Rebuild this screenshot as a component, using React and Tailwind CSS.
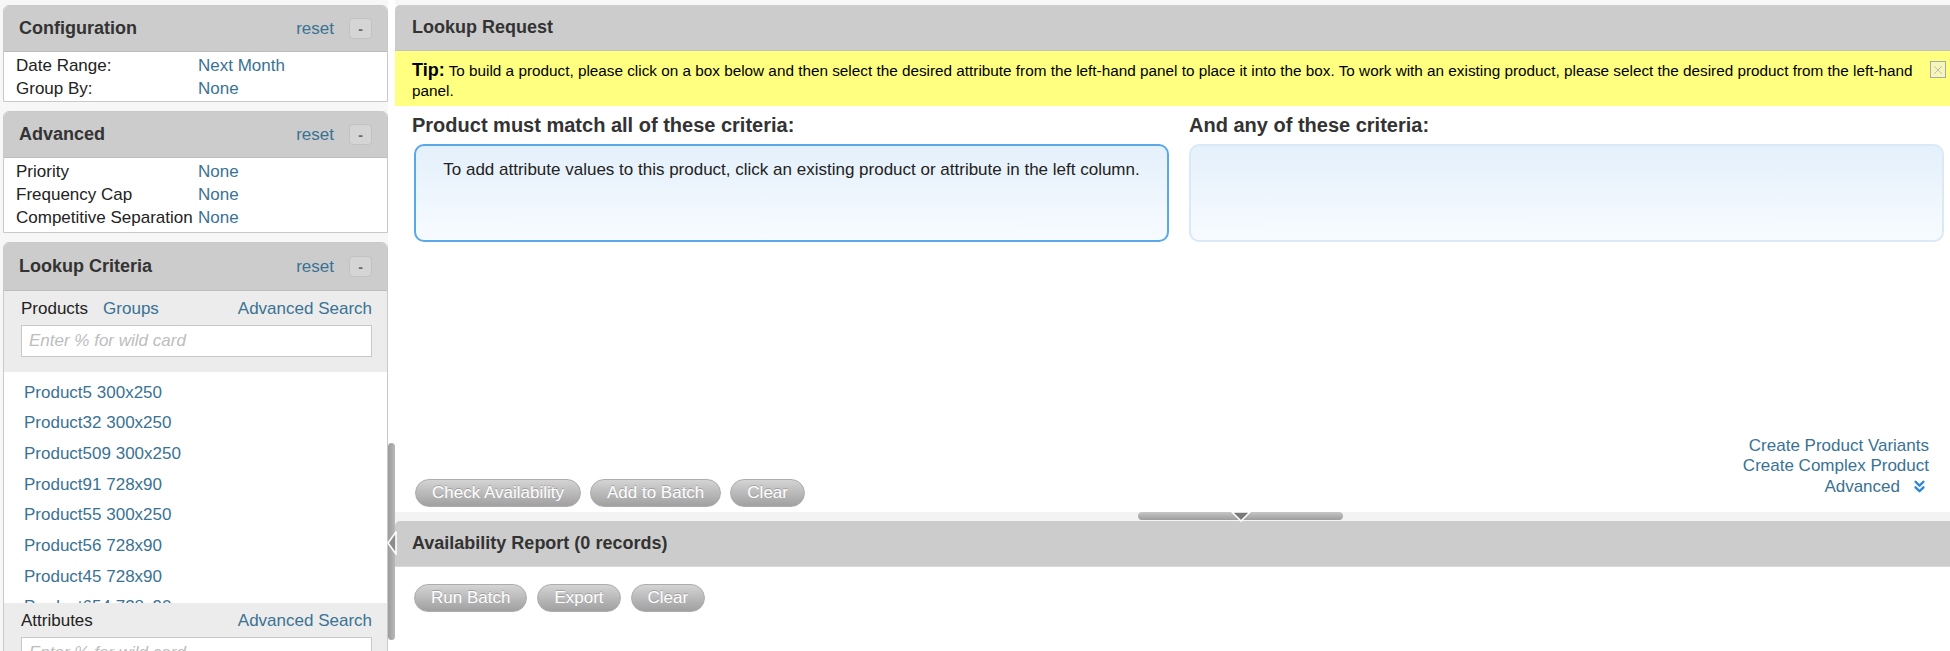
import React from "react";
import { ChevronsDown, X } from "lucide-react";

const LINK = "text-[#3a7293]";

function PanelHeader({ title, h = "h-[46px]" }) {
  return (
    <div className={`${h} shrink-0 bg-[#cccccc] border-b border-[#bdbdbd] rounded-t-[5px] flex items-center pl-[15px] pr-[15px]`}>
      <span className="text-[18px] font-bold text-[#333]">{title}</span>
      <span className={`ml-auto text-[17px] ${LINK}`}>reset</span>
      <span className="ml-[15px] w-[23px] h-[21px] rounded-[4px] bg-[#d5d5d5] border border-[#c2c2c2] flex items-center justify-center text-[#6a6a6a] text-[14px] font-bold leading-none">
        -
      </span>
    </div>
  );
}

function Row({ label, value }) {
  return (
    <div className="flex h-[23px] items-center text-[17px]">
      <span className="w-[182px] shrink-0 text-[#222] whitespace-nowrap">{label}</span>
      <span className={LINK}>{value}</span>
    </div>
  );
}

function Btn({ children }) {
  return (
    <span className="h-[28px] px-[16px] rounded-full border border-[#adadad] bg-linear-to-b from-[#d4d4d4] to-[#a0a0a0] text-white text-[17px] flex items-center [text-shadow:0_-1px_0_rgba(0,0,0,0.2)] whitespace-nowrap">
      {children}
    </span>
  );
}

const products = [
  "Product5 300x250",
  "Product32 300x250",
  "Product509 300x250",
  "Product91 728x90",
  "Product55 300x250",
  "Product56 728x90",
  "Product45 728x90",
  "Product654 728x90",
];

export default function App() {
  return (
    <div className="w-[1950px] h-[651px] overflow-hidden bg-[#f7f7f7] flex font-['Liberation_Sans',Arial,sans-serif]">
      {/* Sidebar */}
      <aside className="w-[388px] shrink-0 pl-[3px] pt-[5px] flex flex-col gap-[9px]">
        <div className="border border-[#c9c9c9] rounded-t-[6px] bg-white">
          <PanelHeader title="Configuration" />
          <div className="pt-[2px] pb-[1px] pl-[12px]">
            <Row label="Date Range:" value="Next Month" />
            <Row label="Group By:" value="None" />
          </div>
        </div>
        <div className="border border-[#c9c9c9] rounded-t-[6px] bg-white">
          <PanelHeader title="Advanced" />
          <div className="pt-[2px] pb-[3px] pl-[12px]">
            <Row label="Priority" value="None" />
            <Row label="Frequency Cap" value="None" />
            <Row label="Competitive Separation" value="None" />
          </div>
        </div>
        <div className="border border-[#c9c9c9] rounded-t-[6px] bg-white flex flex-col">
          <PanelHeader title="Lookup Criteria" h="h-[48px]" />
          <div className="bg-[#ececec] pt-[7px] pb-[15px] pl-[17px] pr-[15px]">
            <div className="flex items-center h-[22px] text-[17px]">
              <span className="text-[#222]">Products</span>
              <span className={`ml-[15px] ${LINK}`}>Groups</span>
              <span className={`ml-auto ${LINK}`}>Advanced Search</span>
            </div>
            <input
              readOnly
              placeholder="Enter % for wild card"
              className="mt-[5px] w-full h-[32px] bg-white border border-[#c8c8c8] pl-[7px] text-[17px] outline-none placeholder:italic placeholder:text-[#bdbdbd]"
            />
          </div>
          <div className="h-[231px] overflow-hidden pt-[5px] pl-[20px] bg-white">
            {products.map((p) => (
              <div key={p} className={`h-[30.7px] flex items-center text-[17px] ${LINK}`}>
                {p}
              </div>
            ))}
          </div>
          <div className="bg-[#ececec] pt-[7px] pb-[15px] pl-[17px] pr-[15px]">
            <div className="flex items-center h-[22px] text-[17px]">
              <span className="text-[#222]">Attributes</span>
              <span className={`ml-auto ${LINK}`}>Advanced Search</span>
            </div>
            <input
              readOnly
              placeholder="Enter % for wild card"
              className="mt-[5px] w-full h-[32px] bg-white border border-[#c8c8c8] pl-[7px] text-[17px] outline-none placeholder:italic placeholder:text-[#bdbdbd]"
            />
          </div>
        </div>
      </aside>

      {/* Gutter with collapse handle */}
      <div className="w-[7px] shrink-0 bg-white flex flex-col">
        <div className="h-[443px] shrink-0" />
        <div className="relative w-[7px] h-[197px] rounded-full bg-linear-to-r from-[#9c9c9c] to-[#b8b8b8]">
          <svg className="absolute left-[-1px] top-[88px]" width="10" height="24" viewBox="0 0 10 24">
            <polygon points="9,1 9,23 1,12" fill="#8c8c8c" stroke="#ffffff" strokeWidth="1.6" />
          </svg>
        </div>
      </div>

      {/* Main */}
      <main className="flex-1 min-w-0 pt-[5px] flex flex-col">
        <section className="h-[507px] shrink-0 bg-white flex flex-col">
          <div className="h-[46px] shrink-0 bg-[#cccccc] rounded-tl-[5px] border-b border-[#c2c2c2] flex items-center pl-[17px]">
            <span className="text-[18px] font-bold text-[#333]">Lookup Request</span>
          </div>
          <div className="h-[55px] shrink-0 bg-[#ffff80] flex items-start pl-[17px] pr-[4px] pt-[9px]">
            <p className="flex-1 text-[15.3px] leading-[20px] text-black">
              <span className="font-bold text-[18px]">Tip:</span> To build a product, please click on a box below and then select the desired attribute from the left-hand panel to place it into the box. To work with an existing product, please select the desired product from the left-hand panel.
            </p>
            <span className="mt-[1px] ml-[4px] w-[16px] h-[17px] shrink-0 border border-[#a8a8a8] bg-[#f6f6b8] flex items-center justify-center">
              <X size={14} color="#b4b4b4" strokeWidth={1.5} />
            </span>
          </div>
          <div className="grid grid-cols-2 gap-[20px] pl-[19px] pr-[6px] pt-[8px]">
            <div>
              <h3 className="text-[20px] font-bold text-[#333] leading-[22px] mb-[8px] -ml-[2px]">
                Product must match all of these criteria:
              </h3>
              <div className="h-[98px] rounded-[10px] border-2 border-[#5aa8ea] bg-linear-to-b from-[#e4f0fb] to-[#f7fbff] text-center pt-[13px] text-[17px] text-[#222] leading-[22px]">
                To add attribute values to this product, click an existing product or attribute in the left column.
              </div>
            </div>
            <div>
              <h3 className="text-[20px] font-bold text-[#333] leading-[22px] mb-[8px]">
                And any of these criteria:
              </h3>
              <div className="h-[98px] rounded-[10px] border-2 border-[#dbe9f6] bg-linear-to-b from-[#e4f0fb] to-[#f7fbff]" />
            </div>
          </div>
          <div className="mt-auto flex items-end justify-between pl-[20px] pr-[21px] pb-[5px]">
            <div className="flex gap-[9px]">
              <Btn>Check Availability</Btn>
              <Btn>Add to Batch</Btn>
              <Btn>Clear</Btn>
            </div>
            <div className={`flex flex-col items-end text-[17px] leading-[20.5px] mb-[10px] ${LINK}`}>
              <span>Create Product Variants</span>
              <span>Create Complex Product</span>
              <span className="flex items-center">
                Advanced
                <ChevronsDown className="ml-[10px]" size={19} color="#2f86d6" strokeWidth={3} />
              </span>
            </div>
          </div>
        </section>

        {/* Splitter */}
        <div className="h-[9px] shrink-0 bg-[#f3f3f3] pl-[743px]">
          <div className="relative w-[205px] h-[8px] rounded-full bg-linear-to-b from-[#c6c6c6] to-[#9d9d9d]">
            <svg className="absolute left-[92px] top-0" width="22" height="10" viewBox="0 0 22 10">
              <polygon points="2,0 20,0 11,9" fill="#7a7a7a" stroke="#ffffff" strokeWidth="1.5" />
            </svg>
          </div>
        </div>

        {/* Availability Report */}
        <div className="h-[46px] shrink-0 bg-[#cccccc] rounded-tl-[5px] border-b border-[#d9d9d9] flex items-center pl-[17px]">
          <span className="text-[18px] font-bold text-[#333]">Availability Report (0 records)</span>
        </div>
        <div className="flex-1 bg-white pt-[17px] pl-[19px]">
          <div className="flex gap-[10px]">
            <Btn>Run Batch</Btn>
            <Btn>Export</Btn>
            <Btn>Clear</Btn>
          </div>
        </div>
      </main>
    </div>
  );
}
